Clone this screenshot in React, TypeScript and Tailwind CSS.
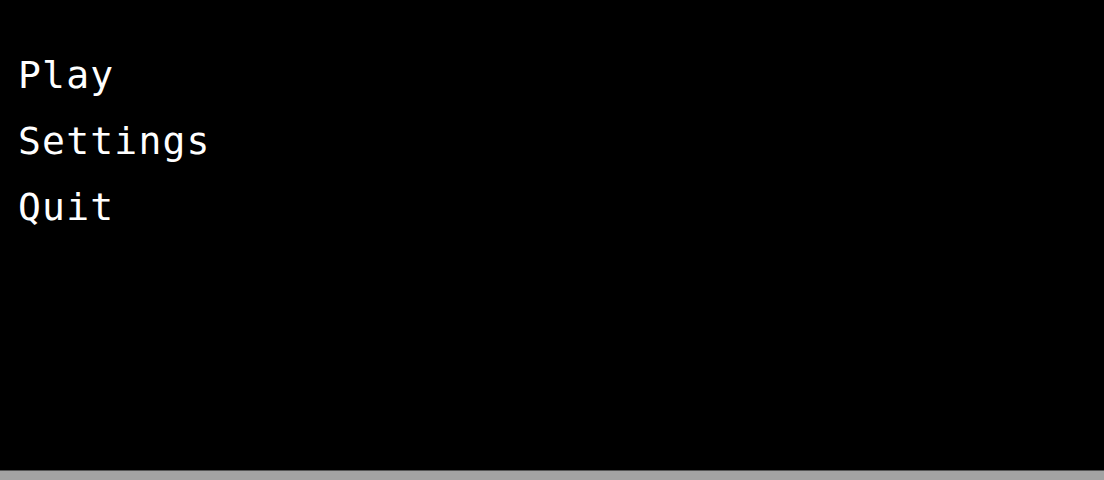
export default function App() {
  return (
    <div className="flex h-[480px] w-full flex-col bg-black">
      <div className="flex flex-1 flex-col bg-black pl-[18px] pt-[42px]">
        {["Play", "Settings", "Quit"].map((t) => (
          <div
            key={t}
            className="text-[38px] font-medium leading-[66px] tracking-[1.2px] text-white"
            style={{ fontFamily: '"DejaVu Sans Mono", monospace' }}
          >
            {t}
          </div>
        ))}
      </div>
      <div className="h-[10px] border-t border-[#555555] bg-[#a3a3a3]" />
    </div>
  );
}
